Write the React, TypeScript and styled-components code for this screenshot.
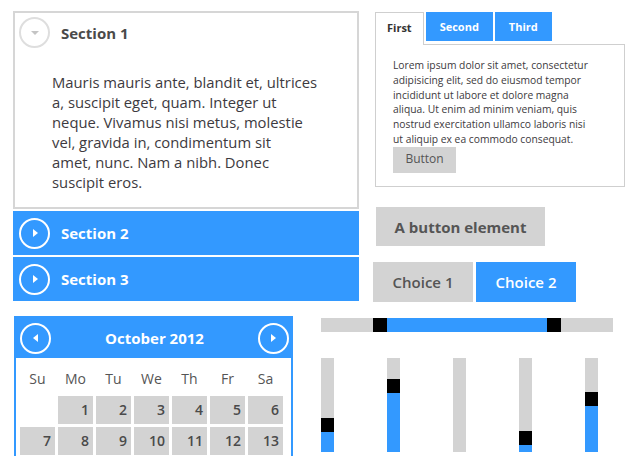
import styled, {createGlobalStyle} from 'styled-components';

const blue = '#3399ff';
const grey = '#d3d3d3';
const text = '#3d3a40';

const GlobalStyle = createGlobalStyle`
	body {
		margin: 0;
		background: #fff;
		font-family: 'Open Sans', 'Noto Sans', sans-serif;
		color: ${text};
	}
`;

type Slider = {value: number};

const verticalSliders: Slider[] = [
	{value: 0.22},
	{value: 0.64},
	{value: -1},
	{value: 0.08},
	{value: 0.5},
];

const sectionLines = [
	'Mauris mauris ante, blandit et, ultrices',
	'a, suscipit eget, quam. Integer ut',
	'neque. Vivamus nisi metus, molestie',
	'vel, gravida in, condimentum sit',
	'amet, nunc. Nam a nibh. Donec',
	'suscipit eros.',
];

const tabLines = [
	'Lorem ipsum dolor sit amet, consectetur',
	'adipisicing elit, sed do eiusmod tempor',
	'incididunt ut labore et dolore magna',
	'aliqua. Ut enim ad minim veniam, quis',
	'nostrud exercitation ullamco laboris nisi',
	'ut aliquip ex ea commodo consequat.',
];

const days = ['Su', 'Mo', 'Tu', 'We', 'Th', 'Fr', 'Sa'];
const dates: (number | null)[] = [null, 1, 2, 3, 4, 5, 6, 7, 8, 9, 10, 11, 12, 13];

function Arrow({dir, color}: {dir: 'down' | 'right' | 'left'; color: string}) {
	const points =
		dir === 'down' ? '4,6 12,6 8,10' : dir === 'right' ? '6,4 11,8 6,12' : '10,4 5,8 10,12';
	return (
		<svg width="16" height="16" viewBox="0 0 16 16">
			<polygon points={points} fill={color} />
		</svg>
	);
}

function App() {
	return (
		<>
			<GlobalStyle />
			<Page>
				<Accordion>
					<OpenSection>
						<SectionHeader>
							<Circle $light>
								<Arrow dir="down" color="#c4c4c4" />
							</Circle>
							<SectionTitle>Section 1</SectionTitle>
						</SectionHeader>
						<SectionBody>
							{sectionLines.map(l => (
								<Line key={l}>{l}</Line>
							))}
						</SectionBody>
					</OpenSection>
					<ClosedSection>
						<Circle>
							<Arrow dir="right" color="#fff" />
						</Circle>
						<SectionTitle $light>Section 2</SectionTitle>
					</ClosedSection>
					<ClosedSection>
						<Circle>
							<Arrow dir="right" color="#fff" />
						</Circle>
						<SectionTitle $light>Section 3</SectionTitle>
					</ClosedSection>
				</Accordion>

				<RightColumn>
					<Tabs>
						<TabBar>
							<Tab $active>First</Tab>
							<Tab>Second</Tab>
							<Tab>Third</Tab>
						</TabBar>
						<TabPanel>
							<p>
								{tabLines.map(l => (
									<Line key={l}>{l}</Line>
								))}
							</p>
							<SmallButton>Button</SmallButton>
						</TabPanel>
					</Tabs>
					<BigButton>A button element</BigButton>
					<ChoiceGroup>
						<Choice>Choice 1</Choice>
						<Choice $active>Choice 2</Choice>
					</ChoiceGroup>
				</RightColumn>

				<Calendar>
					<CalendarHeader>
						<Circle>
							<Arrow dir="left" color="#fff" />
						</Circle>
						<Month>October 2012</Month>
						<Circle>
							<Arrow dir="right" color="#fff" />
						</Circle>
					</CalendarHeader>
					<DayGrid>
						{days.map(d => (
							<DayName key={d}>{d}</DayName>
						))}
						{dates.map((d, i) => (d === null ? <span key={i} /> : <DateCell key={i}>{d}</DateCell>))}
					</DayGrid>
				</Calendar>

				<Sliders>
					<HTrack>
						<HRange />
						<HHandle style={{left: 52}} />
						<HHandle style={{left: 226}} />
					</HTrack>
					<VRow>
						{verticalSliders.map((s, i) => (
							<VTrack key={i}>
								{s.value >= 0 && (
									<>
										<VFill style={{height: `${s.value * 100}%`}} />
										<VHandle style={{bottom: `calc(${s.value * 100}% - 1px)`}} />
									</>
								)}
							</VTrack>
						))}
					</VRow>
				</Sliders>
			</Page>
		</>
	);
}

export default App;

const Page = styled.div`
	display: grid;
	grid-template-columns: 346px 252px;
	column-gap: 14px;
	row-gap: 14px;
	padding: 11px 0 0 13px;
`;

const Accordion = styled.div`
	display: flex;
	flex-direction: column;
	gap: 2px;
`;

const OpenSection = styled.div`
	height: 198px;
	box-sizing: border-box;
	border: 2px solid #d6d6d6;
`;

const SectionHeader = styled.div`
	display: flex;
	align-items: center;
	gap: 11px;
	padding: 4px 0 0 4px;
`;

const Circle = styled.div<{$light?: boolean}>`
	width: 31px;
	height: 31px;
	box-sizing: border-box;
	border-radius: 50%;
	border: 2px solid ${p => (p.$light ? '#dedede' : '#fff')};
	display: flex;
	align-items: center;
	justify-content: center;
	flex-shrink: 0;
`;

const SectionTitle = styled.span<{$light?: boolean}>`
	font-size: 15px;
	font-weight: 700;
	color: ${p => (p.$light ? '#fff' : '#4a4a4a')};
`;

const Line = styled.span`
	display: block;
	white-space: nowrap;
`;

const SectionBody = styled.p`
	margin: 24px 0 0 37px;
	font-size: 14.8px;
	line-height: 20px;
`;

const ClosedSection = styled.div`
	height: 44px;
	background: ${blue};
	display: flex;
	align-items: center;
	gap: 11px;
	padding-left: 6px;
`;

const RightColumn = styled.div`
	display: flex;
	flex-direction: column;
	align-items: flex-start;
`;

const Tabs = styled.div`
	margin: 1px 0 0 2px;
	width: 250px;
`;

const TabBar = styled.div`
	display: flex;
	gap: 2px;
	height: 33px;
	align-items: flex-start;
	position: relative;
	z-index: 1;
	margin-bottom: -1px;
`;

const Tab = styled.div<{$active?: boolean}>`
	height: ${p => (p.$active ? '33px' : '29px')};
	box-sizing: border-box;
	padding: 0 ${p => (p.$active ? '11px' : '14px')};
	display: flex;
	align-items: center;
	font-size: 11px;
	font-weight: 700;
	padding-bottom: ${p => (p.$active ? '4px' : '0')};
	color: ${p => (p.$active ? '#333' : '#fff')};
	background: ${p => (p.$active ? '#fff' : blue)};
	border: ${p => (p.$active ? '1px solid #cfcfcf' : 'none')};
	border-bottom: none;
`;

const TabPanel = styled.div`
	height: 143px;
	box-sizing: border-box;
	border: 1px solid #cfcfcf;
	padding: 13px 0 0 17px;
	font-size: 10.3px;
	line-height: 14.8px;

	p {
		margin: 0;
	}
`;

const SmallButton = styled.div`
	display: inline-flex;
	align-items: center;
	justify-content: center;
	width: 63px;
	height: 26px;
	margin-top: 0;
	background: ${grey};
	color: #555;
	font-size: 12px;
`;

const BigButton = styled.div`
	margin: 20px 0 0 3px;
	width: 169px;
	height: 39px;
	background: ${grey};
	color: #555;
	font-size: 15px;
	font-weight: 700;
	display: flex;
	align-items: center;
	justify-content: center;
`;

const ChoiceGroup = styled.div`
	margin-top: 16px;
	display: flex;
	gap: 3px;
`;

const Choice = styled.div<{$active?: boolean}>`
	width: 100px;
	height: 40px;
	display: flex;
	align-items: center;
	justify-content: center;
	font-size: 15px;
	font-weight: 600;
	background: ${p => (p.$active ? blue : grey)};
	color: ${p => (p.$active ? '#fff' : '#555')};
`;

const Calendar = styled.div`
	width: 279px;
	height: 140px;
	margin-left: 1px;
	box-sizing: border-box;
	border: 2px solid ${blue};
	border-bottom: none;
	overflow: hidden;
`;

const CalendarHeader = styled.div`
	height: 40px;
	background: ${blue};
	display: flex;
	align-items: center;
	justify-content: space-between;
	padding: 0 2px 0 4px;
`;

const Month = styled.span`
	color: #fff;
	font-size: 15px;
	font-weight: 700;
`;

const DayGrid = styled.div`
	display: grid;
	grid-template-columns: repeat(7, 35px);
	grid-auto-rows: 28px;
	gap: 3px;
	padding: 7px 0 0 4px;

	& > :nth-child(-n + 7) {
		height: 28px;
		margin-bottom: 6px;
	}
`;

const DayName = styled.span`
	font-size: 14px;
	text-align: center;
	line-height: 28px;
	color: #555;
`;

const DateCell = styled.span`
	background: ${grey};
	font-size: 14px;
	font-weight: 600;
	color: #4a4a4a;
	text-align: right;
	padding-right: 4px;
	line-height: 28px;
`;

const Sliders = styled.div`
	margin: 2px 0 0 -52px;
	width: 292px;
	display: flex;
	flex-direction: column;
	gap: 26px;
`;

const HTrack = styled.div`
	position: relative;
	height: 14px;
	background: ${grey};
`;

const HRange = styled.div`
	position: absolute;
	left: 59px;
	width: 174px;
	top: 0;
	bottom: 0;
	background: ${blue};
`;

const HHandle = styled.div`
	position: absolute;
	top: 0;
	width: 14px;
	height: 14px;
	background: #000;
`;

const VRow = styled.div`
	display: flex;
	justify-content: space-between;
	padding-right: 15px;
`;

const VTrack = styled.div`
	position: relative;
	width: 13px;
	height: 94px;
	background: ${grey};
`;

const VFill = styled.div`
	position: absolute;
	left: 0;
	right: 0;
	bottom: 0;
	background: ${blue};
`;

const VHandle = styled.div`
	position: absolute;
	left: 0;
	width: 13px;
	height: 14px;
	background: #000;
`;
